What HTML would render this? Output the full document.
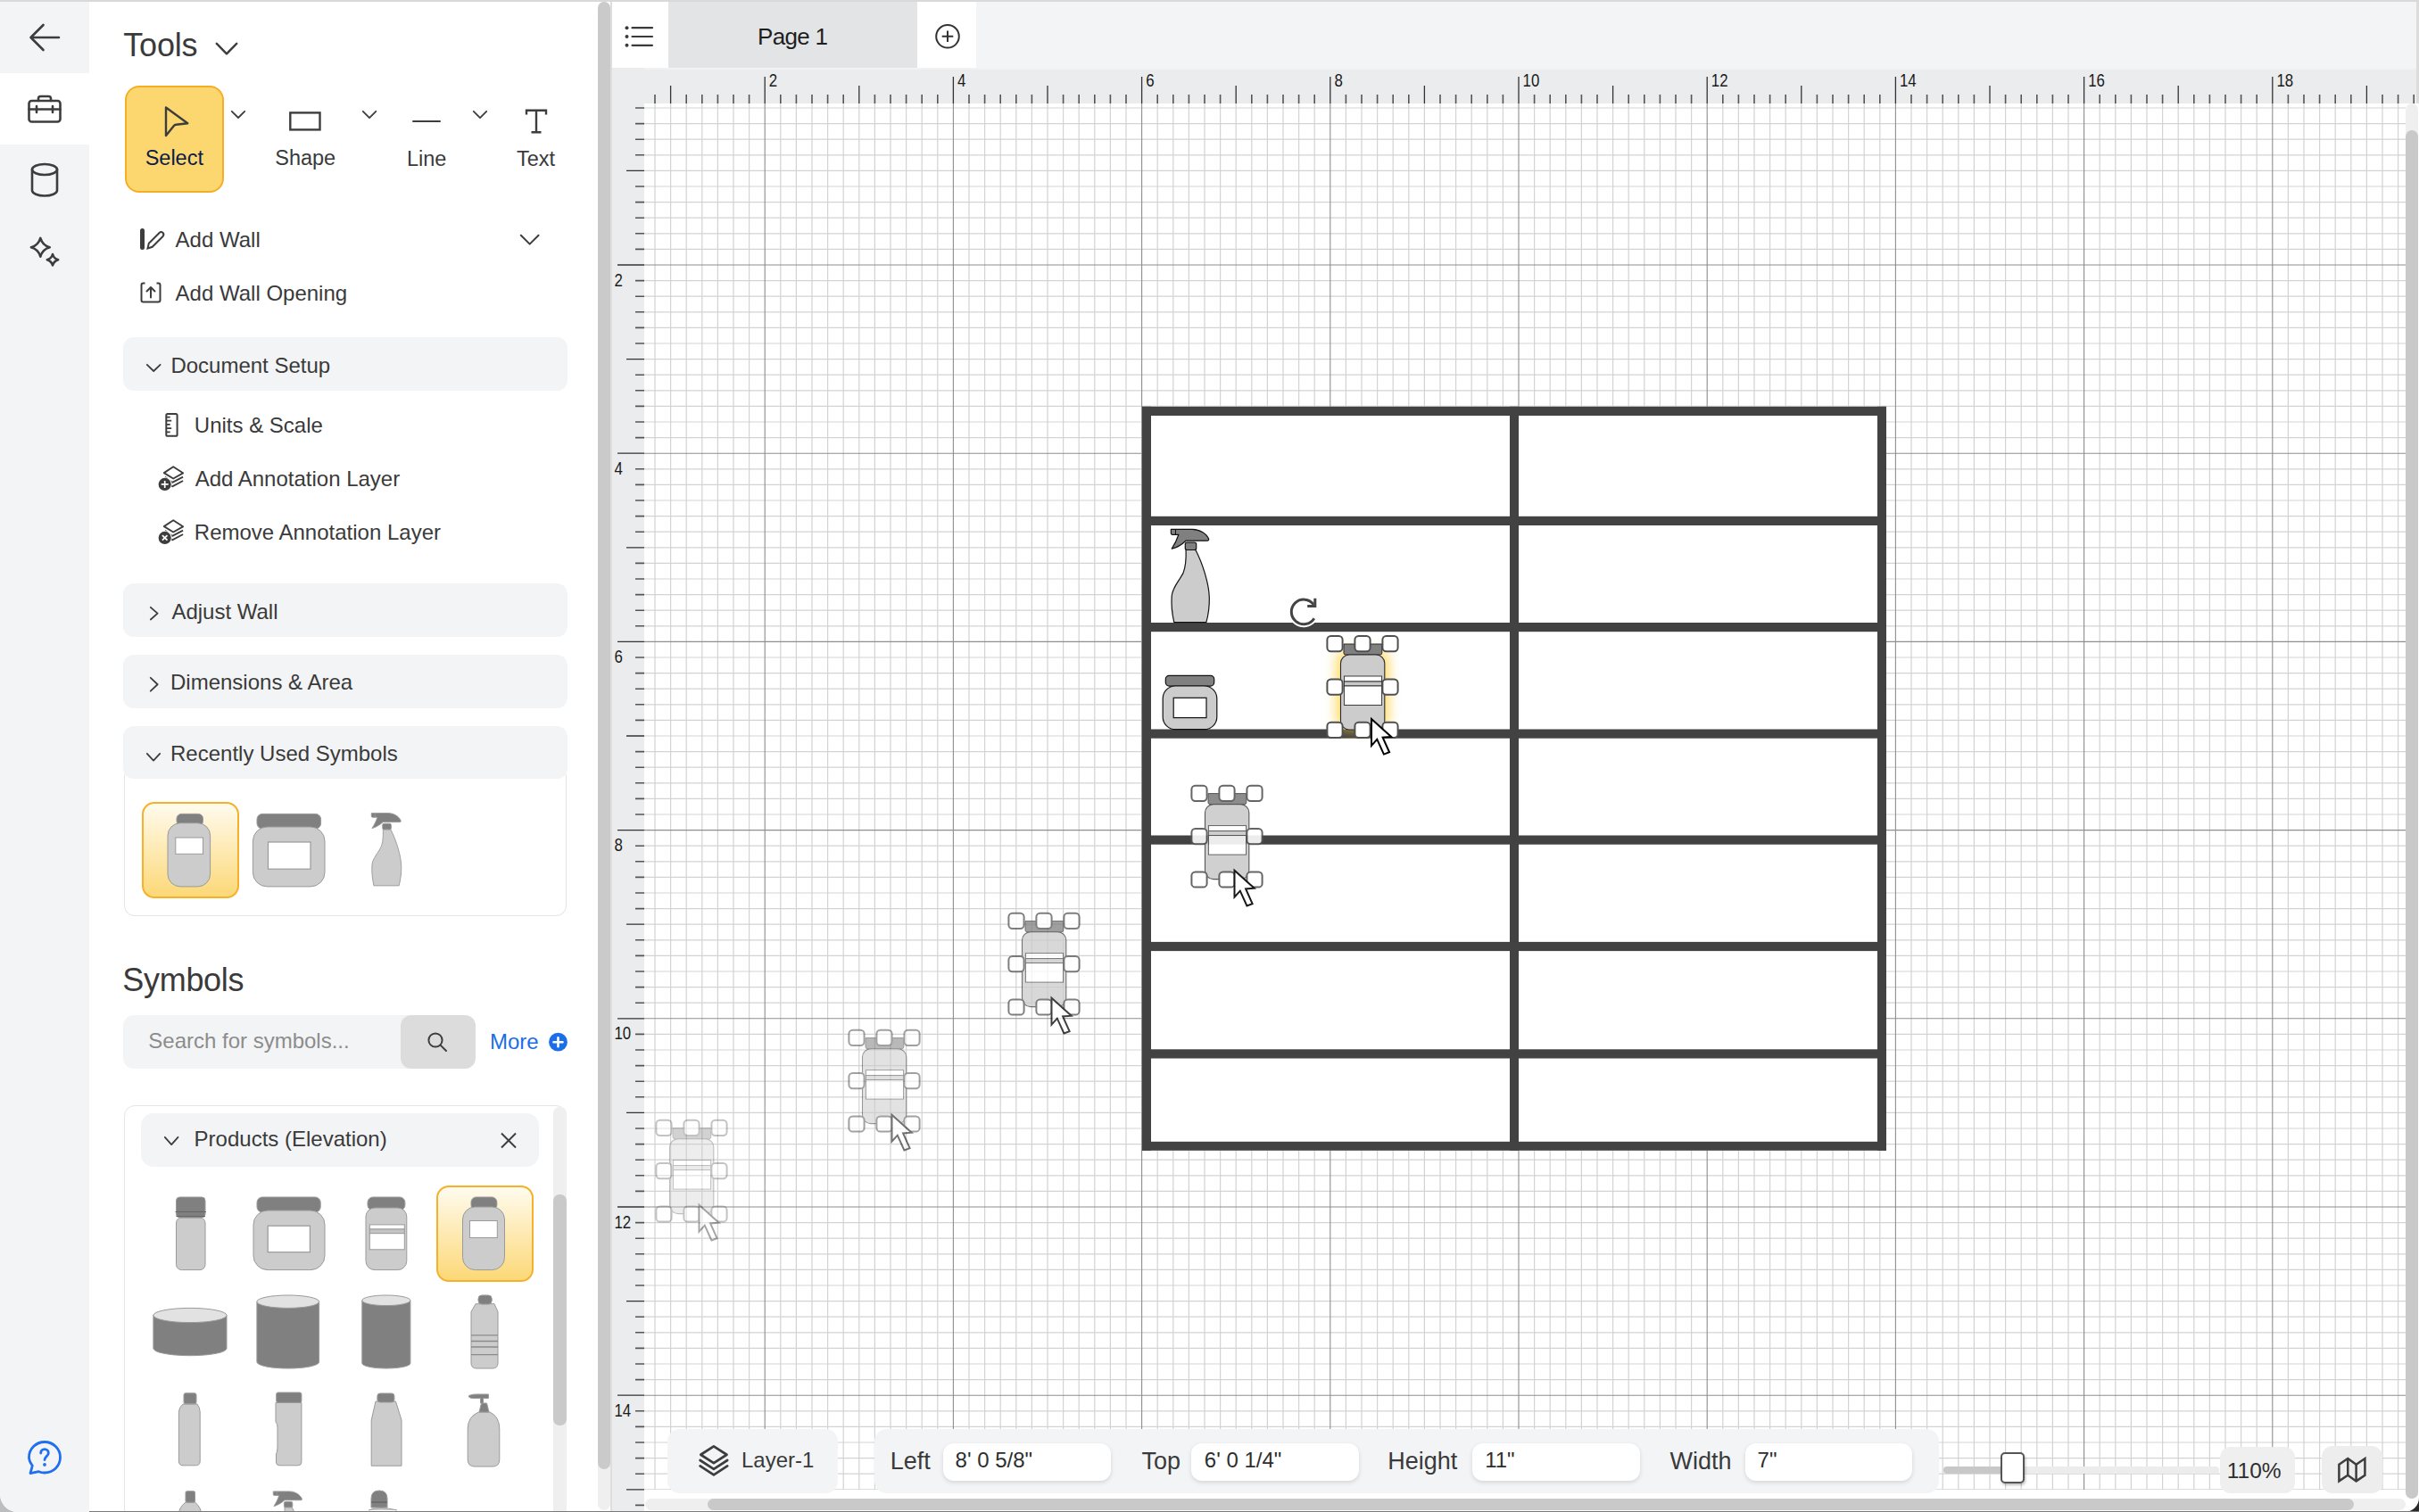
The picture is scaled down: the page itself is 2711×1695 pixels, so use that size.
<!DOCTYPE html>
<html><head><meta charset="utf-8">
<style>
*{margin:0;padding:0;box-sizing:border-box;}
html,body{width:2711px;height:1695px;overflow:hidden;background:#ffffff;}
body{position:relative;font-family:"Liberation Sans",sans-serif;color:#3a3a3a;}
.a{position:absolute;}
.t{position:absolute;white-space:nowrap;line-height:1;}
</style></head><body>

<div class="a" style="left:0;top:0;width:1400px;height:1695px;background:#bdbdbd"></div>
<div class="a" style="left:1400px;top:0;width:1311px;height:1695px;background:#2a2a2a"></div>
<div class="a" style="left:0;top:0;width:2711px;height:1695px;background:#fff;border-radius:0 0 16px 20px;overflow:hidden">
</div>
<div class="a" style="left:0;top:0;width:2711px;height:2px;background:#d9d9d9"></div>
<div class="a" style="left:0;top:2px;width:100px;height:1693px;background:#f3f4f6;border-bottom-left-radius:20px"></div>
<div class="a" style="left:0;top:82px;width:100px;height:80px;background:#fff"></div>
<svg class="a" style="left:30px;top:24px" width="40" height="36" viewBox="0 0 40 36"><path d="M4.5 18H36M18.5 4L4.5 18L18.5 32" fill="none" stroke="#3d3d3d" stroke-width="2.6" stroke-linecap="round" stroke-linejoin="round"/></svg>
<svg class="a" style="left:30px;top:105px" width="40" height="34" viewBox="0 0 40 34"><rect x="2.5" x2="0" y="8" width="35" height="23.5" rx="3" fill="none" stroke="#3d3d3d" stroke-width="2.6" stroke-linecap="round" stroke-linejoin="round"/><path d="M13 8V5.5a2.5 2.5 0 0 1 2.5-2.5h9a2.5 2.5 0 0 1 2.5 2.5V8M2.5 17.5H37.5M11 14V21M29 14V21" fill="none" stroke="#3d3d3d" stroke-width="2.6" stroke-linecap="round" stroke-linejoin="round"/></svg>
<svg class="a" style="left:32px;top:182px" width="36" height="40" viewBox="0 0 36 40"><ellipse cx="18" cy="8" rx="14" ry="6" fill="none" stroke="#3d3d3d" stroke-width="2.6" stroke-linecap="round" stroke-linejoin="round"/><path d="M4 8V31.5c0 3.3 6.3 6 14 6s14-2.7 14-6V8" fill="none" stroke="#3d3d3d" stroke-width="2.6" stroke-linecap="round" stroke-linejoin="round"/></svg>
<svg class="a" style="left:30px;top:263px" width="40" height="38" viewBox="0 0 40 38"><path d="M15.3 3.9000000000000004C16.76 9.10 20.50 12.84 25.700000000000003 14.3C20.50 15.76 16.76 19.50 15.3 24.700000000000003C13.84 19.50 10.10 15.76 4.9 14.3C10.10 12.84 13.84 9.10 15.3 3.9000000000000004Z" fill="none" stroke="#3d3d3d" stroke-width="2.6" stroke-linecap="round" stroke-linejoin="round"/><path d="M29 22.0C29.87 25.10 32.10 27.33 35.2 28.2C32.10 29.07 29.87 31.30 29 34.4C28.13 31.30 25.90 29.07 22.8 28.2C25.90 27.33 28.13 25.10 29 22.0Z" fill="none" stroke="#3d3d3d" stroke-width="2.6" stroke-linecap="round" stroke-linejoin="round"/></svg>
<svg class="a" style="left:29px;top:1613px" width="42" height="42" viewBox="0 0 42 42"><path d="M21 3.5C30.8 3.5 38.5 11.3 38.5 20.8S30.8 38 21 38C18.5 38 16.3 37.5 14.5 36.7L5 38.6L7.3 30C5.3 27.3 3.5 24 3.5 20.8C3.5 11.3 11.2 3.5 21 3.5Z" fill="none" stroke="#1f6fee" stroke-width="2.8" stroke-linejoin="round"/><path d="M16.7 16C16.7 13.3 18.6 11.7 21 11.7S25.3 13.3 25.3 15.9C25.3 19 21 20.2 21 23.6" fill="none" stroke="#1f6fee" stroke-width="2.8" stroke-linecap="round"/><circle cx="21" cy="28.9" r="1.9" fill="#1f6fee"/></svg>
<div class="a" style="left:670px;top:2px;width:14px;height:1691px;background:#efefef;border-radius:7px"></div>
<div class="a" style="left:670px;top:2px;width:14px;height:1645px;background:#cacaca;border-radius:7px"></div>
<div class="a" style="left:684px;top:2px;width:2px;height:1693px;background:#dedede"></div>
<div class="a" style="left:686px;top:2px;width:2024px;height:74px;background:#f3f4f6"></div>
<div class="a" style="left:686px;top:2px;width:62.6px;height:73.5px;background:#fff"></div>
<div class="a" style="left:748.6px;top:2px;width:279.4px;height:73.5px;background:#e3e4e6"></div>
<div class="a" style="left:1028px;top:2px;width:66px;height:73.5px;background:#fff"></div>
<div class="a" style="left:2708px;top:2px;width:3px;height:74px;background:#dcdcdc"></div>
<svg class="a" style="left:698px;top:26px" width="36" height="30" viewBox="0 0 36 30"><g fill="#3a3a3a"><circle cx="4.5" cy="5.2" r="2"/><circle cx="4.5" cy="15" r="2"/><circle cx="4.5" cy="24.8" r="2"/></g><g stroke="#3a3a3a" stroke-width="2.2" stroke-linecap="round"><path d="M10.5 5.2H33M10.5 15H33M10.5 24.8H33"/></g></svg>
<div class="t" style="left:849px;top:27.5px;font-size:26px;letter-spacing:-0.7px;color:#1f1f1f">Page 1</div>
<svg class="a" style="left:1046px;top:25px" width="32" height="32" viewBox="0 0 32 32"><circle cx="16" cy="15.8" r="12.8" fill="none" stroke="#333" stroke-width="2"/><path d="M16 9.5V22.1M9.7 15.8H22.3" stroke="#333" stroke-width="2"/></svg>
<div class="t" style="left:138.3px;top:33.1px;font-size:36px;color:#3a3a3a;letter-spacing:-0.2px">Tools</div>
<svg class="a" style="left:242px;top:48.4px;overflow:visible" width="24" height="13.100000000000001" viewBox="0 0 24 13.100000000000001"><path d="M0.8 0.8L12.00 12.30L23.20 0.8" fill="none" stroke="#3d3d3d" stroke-width="2.4" stroke-linecap="round" stroke-linejoin="round"/></svg>
<div class="a" style="left:140.4px;top:96px;width:110.3px;height:119.7px;background:#fcd770;border-radius:16px;border:2px solid #f6af24"></div>
<svg class="a" style="left:182px;top:117px;overflow:visible" width="32" height="38" viewBox="0 0 32 38"><path d="M4 3.5L28.3 21.2L15.2 22.8Q13.8 23 12.9 24.1L4 35Z" fill="none" stroke="#3d3d3d" stroke-width="2.4" stroke-linejoin="round"/></svg>
<div class="t" style="left:-4.7px;width:400px;text-align:center;top:166.0px;font-size:23.5px;color:#0c1d47;">Select</div>
<svg class="a" style="left:259px;top:124px;overflow:visible" width="16" height="8.800000000000011" viewBox="0 0 16 8.800000000000011"><path d="M0.8 0.8L8.00 8.00L15.20 0.8" fill="none" stroke="#3d3d3d" stroke-width="1.8" stroke-linecap="round" stroke-linejoin="round"/></svg>
<svg class="a" style="left:323px;top:124px;overflow:visible" width="38" height="24" viewBox="0 0 38 24"><rect x="2.3" y="2.4" width="33.2" height="19" fill="none" stroke="#3d3d3d" stroke-width="2.4"/></svg>
<div class="t" style="left:142.2px;width:400px;text-align:center;top:166.1px;font-size:23.5px;color:#3a3a3a;">Shape</div>
<svg class="a" style="left:405.9px;top:124px;overflow:visible" width="16.100000000000023" height="9" viewBox="0 0 16.100000000000023 9"><path d="M0.8 0.8L8.05 8.20L15.30 0.8" fill="none" stroke="#3d3d3d" stroke-width="1.8" stroke-linecap="round" stroke-linejoin="round"/></svg>
<div class="a" style="left:461.6px;top:134.8px;width:32.7px;height:2.4px;background:#3d3d3d;border-radius:1px;"></div>
<div class="t" style="left:278.2px;width:400px;text-align:center;top:166.5px;font-size:23.5px;color:#3a3a3a;">Line</div>
<svg class="a" style="left:530px;top:124px;overflow:visible" width="16" height="9" viewBox="0 0 16 9"><path d="M0.8 0.8L8.00 8.20L15.20 0.8" fill="none" stroke="#3d3d3d" stroke-width="1.8" stroke-linecap="round" stroke-linejoin="round"/></svg>
<svg class="a" style="left:587px;top:121px;overflow:visible" width="28" height="30" viewBox="0 0 28 30"><path d="M3 7.5V2.7H25V7.5M14 2.7V27.3M8.5 27.3H19.5" fill="none" stroke="#3d3d3d" stroke-width="2.4"/></svg>
<div class="t" style="left:400.5px;width:400px;text-align:center;top:166.5px;font-size:23.5px;color:#3a3a3a;">Text</div>
<div class="a" style="left:157.4px;top:255.5px;width:5.0px;height:24.3px;background:#3d3d3d;border-radius:2.5px;"></div>
<svg class="a" style="left:163px;top:258px;overflow:visible" width="22" height="23" viewBox="0 0 22 23"><path d="M2.5 20.5L3.8 14.8L15.6 3Q17.6 1.1 19.6 3Q21.3 5 19.5 7L7.7 18.8Z" fill="none" stroke="#3d3d3d" stroke-width="2"/></svg>
<div class="t" style="left:196.6px;top:257.0px;font-size:24px;color:#3a3a3a;">Add Wall</div>
<svg class="a" style="left:583.2px;top:262.9px;overflow:visible" width="21.399999999999977" height="11.400000000000034" viewBox="0 0 21.399999999999977 11.400000000000034"><path d="M0.8 0.8L10.70 10.60L20.60 0.8" fill="none" stroke="#3d3d3d" stroke-width="2.0" stroke-linecap="round" stroke-linejoin="round"/></svg>
<svg class="a" style="left:156px;top:315px;overflow:visible" width="28" height="26" viewBox="0 0 28 26"><path d="M6.5 2.5H4.5Q2.5 2.5 2.5 4.5V21.5Q2.5 23.5 4.5 23.5H21.5Q23.5 23.5 23.5 21.5V4.5Q23.5 2.5 21.5 2.5H19.5" fill="none" stroke="#3d3d3d" stroke-width="2"/><path d="M13 18.5V7M8.5 11.5L13 7L17.5 11.5" fill="none" stroke="#3d3d3d" stroke-width="2" stroke-linecap="round" stroke-linejoin="round"/></svg>
<div class="t" style="left:196.6px;top:317.1px;font-size:24px;color:#3a3a3a;">Add Wall Opening</div>
<div class="a" style="left:138px;top:378px;width:497.5px;height:59.8px;background:#f3f4f6;border-radius:12px;"></div>
<svg class="a" style="left:163.8px;top:408.2px;overflow:visible" width="16.399999999999977" height="8.800000000000011" viewBox="0 0 16.399999999999977 8.800000000000011"><path d="M0.8 0.8L8.20 8.00L15.60 0.8" fill="none" stroke="#3d3d3d" stroke-width="1.8" stroke-linecap="round" stroke-linejoin="round"/></svg>
<div class="t" style="left:191.4px;top:397.7px;font-size:24px;color:#3a3a3a;">Document Setup</div>
<svg class="a" style="left:183px;top:461px;overflow:visible" width="18" height="30" viewBox="0 0 18 30"><rect x="3.3" y="3" width="12.3" height="24.8" rx="1.6" fill="none" stroke="#3d3d3d" stroke-width="2"/><path d="M3.3 6.7H7.7M3.3 10.7H9.2M3.3 14.8H7.7M3.3 19.2H9.2M3.3 23.3H7.7" stroke="#3d3d3d" stroke-width="1.7"/></svg>
<div class="t" style="left:217.8px;top:465.1px;font-size:24px;color:#3a3a3a;">Units &amp; Scale</div>
<svg class="a" style="left:176px;top:515px;overflow:visible" width="34" height="40" viewBox="0 0 34 40"><path d="M18.2 8.2L29.1 15.3L18.2 21.5L7.8 15.1Z" fill="none" stroke="#3d3d3d" stroke-width="1.9" stroke-linejoin="round"/><path d="M9 19.8L17.1 25.9L29.1 19.6M9 24.2L17.1 30.3L29.1 24" fill="none" stroke="#3d3d3d" stroke-width="1.9" stroke-linejoin="round"/><circle cx="8.7" cy="27.9" r="8" fill="#fff"/><circle cx="8.7" cy="27.9" r="7.1" fill="#3d3d3d"/><path d="M8.7 23.9V31.9M4.7 27.9H12.7" stroke="#fff" stroke-width="1.7"/></svg>
<div class="t" style="left:218.7px;top:524.9px;font-size:24px;color:#3a3a3a;">Add Annotation Layer</div>
<svg class="a" style="left:176px;top:575.1px;overflow:visible" width="34" height="40" viewBox="0 0 34 40"><path d="M18.2 8.2L29.1 15.3L18.2 21.5L7.8 15.1Z" fill="none" stroke="#3d3d3d" stroke-width="1.9" stroke-linejoin="round"/><path d="M9 19.8L17.1 25.9L29.1 19.6M9 24.2L17.1 30.3L29.1 24" fill="none" stroke="#3d3d3d" stroke-width="1.9" stroke-linejoin="round"/><circle cx="8.7" cy="27.9" r="8" fill="#fff"/><circle cx="8.7" cy="27.9" r="7.1" fill="#3d3d3d"/><path d="M5.9 25.1L11.5 30.7M11.5 25.1L5.9 30.7" stroke="#fff" stroke-width="1.7"/></svg>
<div class="t" style="left:217.8px;top:585.1px;font-size:24px;color:#3a3a3a;">Remove Annotation Layer</div>
<div class="a" style="left:138.3px;top:654.3px;width:497.4px;height:59.6px;background:#f3f4f6;border-radius:12px;"></div>
<svg class="a" style="left:167.7px;top:680.4px;overflow:visible" width="9.400000000000006" height="15.300000000000068" viewBox="0 0 9.400000000000006 15.300000000000068"><path d="M0.8 0.8L8.60 7.65L0.8 14.50" fill="none" stroke="#3d3d3d" stroke-width="1.8" stroke-linecap="round" stroke-linejoin="round"/></svg>
<div class="t" style="left:192.4px;top:673.9px;font-size:24px;color:#3a3a3a;">Adjust Wall</div>
<div class="a" style="left:138.3px;top:734.2px;width:497.4px;height:59.6px;background:#f3f4f6;border-radius:12px;"></div>
<svg class="a" style="left:167.7px;top:759.4px;overflow:visible" width="9.400000000000006" height="16.5" viewBox="0 0 9.400000000000006 16.5"><path d="M0.8 0.8L8.60 8.25L0.8 15.70" fill="none" stroke="#3d3d3d" stroke-width="1.8" stroke-linecap="round" stroke-linejoin="round"/></svg>
<div class="t" style="left:191.0px;top:753.4px;font-size:24px;color:#3a3a3a;">Dimensions &amp; Area</div>
<div class="a" style="left:138.8px;top:860px;width:496.2px;height:166.7px;background:#fff;border-radius:12px;border:1.5px solid #e4e4e4;border-top:none"></div>
<div class="a" style="left:138.3px;top:814.2px;width:497.4px;height:59.2px;background:#f3f4f6;border-radius:12px;"></div>
<svg class="a" style="left:164px;top:843.8px;overflow:visible" width="16" height="9.400000000000091" viewBox="0 0 16 9.400000000000091"><path d="M0.8 0.8L8.00 8.60L15.20 0.8" fill="none" stroke="#3d3d3d" stroke-width="1.8" stroke-linecap="round" stroke-linejoin="round"/></svg>
<div class="t" style="left:191.0px;top:833.4px;font-size:24px;color:#3a3a3a;">Recently Used Symbols</div>
<div class="a" style="left:158.5px;top:898.6px;width:109.1px;height:108.9px;background:linear-gradient(#fffbee,#fcd877);border-radius:14px;border:2px solid #f6b02a"></div>
<div class="t" style="left:137.3px;top:1081.0px;font-size:36px;color:#3a3a3a;letter-spacing:-0.3px">Symbols</div>
<div class="a" style="left:138.3px;top:1138.2px;width:394.4px;height:59.4px;background:#f3f4f6;border-radius:12px;"></div>
<div class="a" style="left:449.2px;top:1138.2px;width:83.5px;height:59.4px;background:#dcdcdc;border-radius:12px;"></div>
<div class="t" style="left:166.3px;top:1154.7px;font-size:24px;color:#8c8c8c;">Search for symbols...</div>
<svg class="a" style="left:478px;top:1156px;overflow:visible" width="25" height="25" viewBox="0 0 25 25"><circle cx="10" cy="10" r="7.6" fill="none" stroke="#3d3d3d" stroke-width="2"/><path d="M15.6 15.6L22 22" stroke="#3d3d3d" stroke-width="2" stroke-linecap="round"/></svg>
<div class="t" style="left:549.0px;top:1155.5px;font-size:24px;color:#1b6ee8;">More</div>
<svg class="a" style="left:614px;top:1157px;overflow:visible" width="23" height="23" viewBox="0 0 23 23"><circle cx="11.5" cy="11.2" r="10.4" fill="#1b6ee8"/><path d="M11.5 6.2V16.2M6.5 11.2H16.5" stroke="#fff" stroke-width="2.6" stroke-linecap="round"/></svg>
<div class="a" style="left:138.8px;top:1238.6px;width:496.4px;height:501.4px;background:#fff;border-radius:12px;border:1.5px solid #e4e4e4"></div>
<div class="a" style="left:620px;top:1240.8px;width:14.5px;height:499.2px;background:#efefef;border-radius:7px;"></div>
<div class="a" style="left:620px;top:1339.3px;width:14.5px;height:258.3px;background:#c9c9c9;border-radius:7px;"></div>
<div class="a" style="left:158px;top:1248px;width:445.7px;height:59.6px;background:#f3f4f6;border-radius:14px;"></div>
<svg class="a" style="left:183.7px;top:1273.6px;overflow:visible" width="16.30000000000001" height="9.900000000000091" viewBox="0 0 16.30000000000001 9.900000000000091"><path d="M0.8 0.8L8.15 9.10L15.50 0.8" fill="none" stroke="#3d3d3d" stroke-width="1.8" stroke-linecap="round" stroke-linejoin="round"/></svg>
<div class="t" style="left:217.6px;top:1265.4px;font-size:24px;color:#3a3a3a;">Products (Elevation)</div>
<svg class="a" style="left:560px;top:1269px;overflow:visible" width="20" height="19" viewBox="0 0 20 19"><path d="M2 1.5L18 17.5M18 1.5L2 17.5" stroke="#3d3d3d" stroke-width="2"/></svg>
<div class="a" style="left:488.5px;top:1328.6px;width:109.3px;height:108.9px;background:linear-gradient(#fffbee,#fcd877);border-radius:14px;border:2px solid #f6b02a"></div>
<svg class="a" style="left:0;top:0" width="700" height="1695" viewBox="0 0 700 1695"><rect x="198" y="912.4" width="29.5" height="13.3" rx="5.2" fill="#808080" stroke="#9a9a9a" stroke-width="1"/><rect x="188" y="922.7" width="47.6" height="71.2" rx="14" fill="#cccccc" stroke="#9a9a9a" stroke-width="1"/><rect x="196.8" y="939" width="30.7" height="18.3" fill="#fff" stroke="#9a9a9a" stroke-width="1"/><rect x="288" y="912.4" width="71.6" height="16.6" rx="6" fill="#808080" stroke="#9a9a9a" stroke-width="1"/><rect x="283.4" y="927" width="80.6" height="66.9" rx="16" fill="#cccccc" stroke="#9a9a9a" stroke-width="1"/><rect x="300.5" y="944" width="47.5" height="30.2" fill="#fff" stroke="#999" stroke-width="1.2"/><g transform="translate(416,911.3) scale(0.78) translate(-1312,-593)" stroke="#9a9a9a" stroke-width="1.2" stroke-linejoin="round"><path d="M1329.1 616.5C1329.5 628 1328.5 636 1326.1 641.9C1322.5 650 1314 658 1313.2 668C1312.5 678 1314 690 1315.8 697.6H1351.9C1354 690 1355.5 680 1355.3 670C1355 655 1348 632 1339.9 616.5Z" fill="#cccccc"/><rect x="1328.3" y="608.4" width="12.4" height="8.5" rx="2" fill="#808080"/><path d="M1312.35 593.3H1336.4C1345 593.5 1352.5 598.5 1354.6 604.3Q1355 606.2 1353 606.2H1329C1325 610 1318 614 1313.2 615.2C1316 611 1319 605 1320.9 599.3H1313.8Q1312.35 599.3 1312.35 597.8Z" fill="#808080"/><path d="M1317.5 593.8V599" stroke-width="1"/></g><rect x="197.5" y="1365" width="32.5" height="58.6" rx="6" fill="#cccccc" stroke="#9a9a9a" stroke-width="1"/><rect x="197.5" y="1342" width="32.5" height="23" rx="4" fill="#808080" stroke="#9a9a9a" stroke-width="1"/><path d="M196.5 1358.5H231M197.5 1363.5H230" stroke="#666" stroke-width="1.2"/><rect x="288" y="1342" width="71.2" height="17.0" rx="6" fill="#808080" stroke="#9a9a9a" stroke-width="1"/><rect x="284" y="1357" width="80.0" height="66.6" rx="16" fill="#cccccc" stroke="#9a9a9a" stroke-width="1"/><rect x="300.2" y="1374.2" width="47.2" height="29.5" fill="#fff" stroke="#999" stroke-width="1.2"/><rect x="412" y="1342" width="41.9" height="14.8" rx="5.9" fill="#808080" stroke="#9a9a9a" stroke-width="1"/><rect x="410" y="1354" width="45.8" height="69.6" rx="10" fill="#cccccc" stroke="#9a9a9a" stroke-width="1"/><rect x="414.3" y="1372.9" width="39.0" height="5.1" fill="#fff" stroke="#9a9a9a" stroke-width="1"/><rect x="414.3" y="1378" width="39.0" height="4.7" fill="#c4c4c4" stroke="#9a9a9a" stroke-width="1"/><rect x="414.3" y="1382.7" width="39.0" height="18.1" fill="#fff" stroke="#9a9a9a" stroke-width="1"/><rect x="528" y="1342" width="28.9" height="14.3" rx="5.6" fill="#808080" stroke="#9a9a9a" stroke-width="1"/><rect x="518.5" y="1353" width="47.0" height="70.6" rx="14" fill="#cccccc" stroke="#9a9a9a" stroke-width="1"/><rect x="526.5" y="1368.5" width="30.8" height="19.0" fill="#fff" stroke="#9a9a9a" stroke-width="1"/><path d="M171.9 1474.5V1511.6000000000001A41.05 8.099999999999909 0 0 0 254 1511.6000000000001V1474.5Z" fill="#808080" stroke="#9a9a9a" stroke-width="1"/><ellipse cx="212.95" cy="1474.5" rx="41.05" ry="8.099999999999909" fill="#e2e2e2" stroke="#9a9a9a" stroke-width="1"/><path d="M287.9 1459.2V1526.8A34.85000000000002 7.2000000000000455 0 0 0 357.6 1526.8V1459.2Z" fill="#808080" stroke="#9a9a9a" stroke-width="1"/><ellipse cx="322.75" cy="1459.2" rx="34.85000000000002" ry="7.2000000000000455" fill="#e2e2e2" stroke="#9a9a9a" stroke-width="1"/><path d="M405.8 1457.8V1528.2A27.049999999999983 5.7999999999999545 0 0 0 459.9 1528.2V1457.8Z" fill="#808080" stroke="#9a9a9a" stroke-width="1"/><ellipse cx="432.85" cy="1457.8" rx="27.049999999999983" ry="5.7999999999999545" fill="#e2e2e2" stroke="#9a9a9a" stroke-width="1"/><path d="M533 1461.7H554L558 1470.5V1528Q558 1534 552 1534H534Q528 1534 528 1528V1470.5Z" fill="#cccccc" stroke="#9a9a9a" stroke-width="1"/><rect x="536" y="1452" width="15.2" height="10" rx="4" fill="#808080" stroke="#9a9a9a" stroke-width="1"/><path d="M528 1496.8H558M528 1503.5H558M528 1510H558M528 1518.7H558" stroke="#8a8a8a" stroke-width="1.3"/><path d="M205 1574H221Q224.2 1578 224.2 1583V1638Q224.2 1642.8 219.5 1642.8H205Q200.4 1642.8 200.4 1638V1583Q200.4 1578 205 1574Z" fill="#cccccc" stroke="#9a9a9a" stroke-width="1"/><rect x="206" y="1561.8" width="14" height="12" rx="2" fill="#808080" stroke="#9a9a9a" stroke-width="1"/><path d="M309 1572.4H337.9V1638.8Q337.9 1642.8 334 1642.8H313Q309.5 1642.8 309.5 1639V1630Q311 1628 311 1622V1600Q311 1596 309 1594Z" fill="#cccccc" stroke="#9a9a9a" stroke-width="1"/><rect x="309.7" y="1561" width="28.2" height="11.4" rx="2" fill="#808080" stroke="#9a9a9a" stroke-width="1"/><path d="M421 1571H443.5L450 1592V1643.2H416.2V1592Z" fill="#cccccc" stroke="#9a9a9a" stroke-width="1"/><rect x="422.9" y="1562" width="19" height="10" rx="3" fill="#808080" stroke="#9a9a9a" stroke-width="1"/><path d="M536.5 1583H549Q559.8 1588 559.8 1602V1636Q559.8 1644 552 1644H532Q524.2 1644 524.2 1636V1602Q524.2 1588 536.5 1583Z" fill="#cccccc" stroke="#9a9a9a" stroke-width="1"/><path d="M537 1583L539.5 1573H545.5L548 1583Z" fill="#808080" stroke="#9a9a9a" stroke-width="1"/><path d="M525.5 1564.5Q530 1562.5 536 1563H547.4V1567.5H541.5V1573H538.5V1567.5H530Q527 1567.5 525.5 1566Z" fill="#808080" stroke="#9a9a9a" stroke-width="1"/><path d="M208 1684Q200 1690 200 1700H226Q226 1690 218.5 1684Z" fill="#cccccc" stroke="#9a9a9a" stroke-width="1"/><rect x="208" y="1671.7" width="10.5" height="12.5" rx="1.5" fill="#808080" stroke="#9a9a9a" stroke-width="1"/><g transform="translate(306,1671.7) scale(0.76) translate(-1312,-593)" stroke="#9a9a9a" stroke-width="1.2" stroke-linejoin="round"><path d="M1329.1 616.5C1329.5 628 1328.5 636 1326.1 641.9C1322.5 650 1314 658 1313.2 668C1312.5 678 1314 690 1315.8 697.6H1351.9C1354 690 1355.5 680 1355.3 670C1355 655 1348 632 1339.9 616.5Z" fill="#cccccc"/><rect x="1328.3" y="608.4" width="12.4" height="8.5" rx="2" fill="#808080"/><path d="M1312.35 593.3H1336.4C1345 593.5 1352.5 598.5 1354.6 604.3Q1355 606.2 1353 606.2H1329C1325 610 1318 614 1313.2 615.2C1316 611 1319 605 1320.9 599.3H1313.8Q1312.35 599.3 1312.35 597.8Z" fill="#808080"/><path d="M1317.5 593.8V599" stroke-width="1"/></g><path d="M416 1690V1680Q416 1671 425 1671Q434 1671 434 1680V1690Z" fill="#808080" stroke="#9a9a9a" stroke-width="1"/><path d="M416 1684H434" stroke="#666" stroke-width="1.5"/><path d="M413 1693Q425 1688 445 1693" fill="#cccccc" stroke="#9a9a9a" stroke-width="1"/></svg>
<svg class="a" style="left:0;top:0" width="2711" height="1695" viewBox="0 0 2711 1695">
<path d="M734.00 116V1680M751.60 116V1680M769.20 116V1680M786.80 116V1680M804.40 116V1680M822.00 116V1680M839.60 116V1680M874.80 116V1680M892.40 116V1680M910.00 116V1680M927.60 116V1680M945.20 116V1680M962.80 116V1680M980.40 116V1680M998.00 116V1680M1015.60 116V1680M1033.20 116V1680M1050.80 116V1680M1086.00 116V1680M1103.60 116V1680M1121.20 116V1680M1138.80 116V1680M1156.40 116V1680M1174.00 116V1680M1191.60 116V1680M1209.20 116V1680M1226.80 116V1680M1244.40 116V1680M1262.00 116V1680M1297.20 116V1680M1314.80 116V1680M1332.40 116V1680M1350.00 116V1680M1367.60 116V1680M1385.20 116V1680M1402.80 116V1680M1420.40 116V1680M1438.00 116V1680M1455.60 116V1680M1473.20 116V1680M1508.40 116V1680M1526.00 116V1680M1543.60 116V1680M1561.20 116V1680M1578.80 116V1680M1596.40 116V1680M1614.00 116V1680M1631.60 116V1680M1649.20 116V1680M1666.80 116V1680M1684.40 116V1680M1719.60 116V1680M1737.20 116V1680M1754.80 116V1680M1772.40 116V1680M1790.00 116V1680M1807.60 116V1680M1825.20 116V1680M1842.80 116V1680M1860.40 116V1680M1878.00 116V1680M1895.60 116V1680M1930.80 116V1680M1948.40 116V1680M1966.00 116V1680M1983.60 116V1680M2001.20 116V1680M2018.80 116V1680M2036.40 116V1680M2054.00 116V1680M2071.60 116V1680M2089.20 116V1680M2106.80 116V1680M2142.00 116V1680M2159.60 116V1680M2177.20 116V1680M2194.80 116V1680M2212.40 116V1680M2230.00 116V1680M2247.60 116V1680M2265.20 116V1680M2282.80 116V1680M2300.40 116V1680M2318.00 116V1680M2353.20 116V1680M2370.80 116V1680M2388.40 116V1680M2406.00 116V1680M2423.60 116V1680M2441.20 116V1680M2458.80 116V1680M2476.40 116V1680M2494.00 116V1680M2511.60 116V1680M2529.20 116V1680M2564.40 116V1680M2582.00 116V1680M2599.60 116V1680M2617.20 116V1680M2634.80 116V1680M2652.40 116V1680M2670.00 116V1680M2687.60 116V1680M722 121.00H2696M722 138.60H2696M722 156.20H2696M722 173.80H2696M722 191.40H2696M722 209.00H2696M722 226.60H2696M722 244.20H2696M722 261.80H2696M722 279.40H2696M722 314.60H2696M722 332.20H2696M722 349.80H2696M722 367.40H2696M722 385.00H2696M722 402.60H2696M722 420.20H2696M722 437.80H2696M722 455.40H2696M722 473.00H2696M722 490.60H2696M722 525.80H2696M722 543.40H2696M722 561.00H2696M722 578.60H2696M722 596.20H2696M722 613.80H2696M722 631.40H2696M722 649.00H2696M722 666.60H2696M722 684.20H2696M722 701.80H2696M722 737.00H2696M722 754.60H2696M722 772.20H2696M722 789.80H2696M722 807.40H2696M722 825.00H2696M722 842.60H2696M722 860.20H2696M722 877.80H2696M722 895.40H2696M722 913.00H2696M722 948.20H2696M722 965.80H2696M722 983.40H2696M722 1001.00H2696M722 1018.60H2696M722 1036.20H2696M722 1053.80H2696M722 1071.40H2696M722 1089.00H2696M722 1106.60H2696M722 1124.20H2696M722 1159.40H2696M722 1177.00H2696M722 1194.60H2696M722 1212.20H2696M722 1229.80H2696M722 1247.40H2696M722 1265.00H2696M722 1282.60H2696M722 1300.20H2696M722 1317.80H2696M722 1335.40H2696M722 1370.60H2696M722 1388.20H2696M722 1405.80H2696M722 1423.40H2696M722 1441.00H2696M722 1458.60H2696M722 1476.20H2696M722 1493.80H2696M722 1511.40H2696M722 1529.00H2696M722 1546.60H2696M722 1581.80H2696M722 1599.40H2696M722 1617.00H2696M722 1634.60H2696M722 1652.20H2696M722 1669.80H2696" stroke="#d3d3d3" stroke-width="1.2" fill="none"/>
<path d="M857.20 116V1680M1068.40 116V1680M1279.60 116V1680M1490.80 116V1680M1702.00 116V1680M1913.20 116V1680M2124.40 116V1680M2335.60 116V1680M2546.80 116V1680M722 297.00H2696M722 508.20H2696M722 719.40H2696M722 930.60H2696M722 1141.80H2696M722 1353.00H2696M722 1564.20H2696" stroke="#8e8e8e" stroke-width="1.1" fill="none"/>
<rect x="1280" y="455.8" width="834" height="834.0" fill="#fff"/>
<rect x="1280" y="455.8" width="834" height="10.2" fill="#424242"/>
<rect x="1280" y="1279.8" width="834" height="10" fill="#424242"/>
<rect x="1280" y="455.8" width="10" height="834.0" fill="#424242"/>
<rect x="2104" y="455.8" width="10" height="834.0" fill="#424242"/>
<rect x="1692" y="455.8" width="10" height="834.0" fill="#424242"/>
<rect x="1280" y="578.8" width="834" height="10.2" fill="#424242"/>
<rect x="1280" y="698.0" width="834" height="10.2" fill="#424242"/>
<rect x="1280" y="817.5" width="834" height="10.2" fill="#424242"/>
<rect x="1280" y="936.5" width="834" height="10.2" fill="#424242"/>
<rect x="1280" y="1055.9" width="834" height="10.2" fill="#424242"/>
<rect x="1280" y="1176.3" width="834" height="10.2" fill="#424242"/>
<g stroke="#111" stroke-width="1.2" stroke-linejoin="round"><path d="M1329.1 616.5C1329.5 628 1328.5 636 1326.1 641.9C1322.5 650 1314 658 1313.2 668C1312.5 678 1314 690 1315.8 697.6H1351.9C1354 690 1355.5 680 1355.3 670C1355 655 1348 632 1339.9 616.5Z" fill="#cccccc"/><rect x="1328.3" y="608.2" width="12.4" height="8.3" rx="2" fill="#808080"/><path d="M1312.35 593.3H1336.4C1345 593.5 1352.5 598.5 1354.6 604.3Q1355 606.2 1353 606.2H1329C1325 610 1318 614 1313.2 615.2C1316 611 1319 605 1320.9 599.3H1313.8Q1312.35 599.3 1312.35 597.8Z" fill="#808080"/><path d="M1317.5 593.8V599" stroke-width="1"/></g>
<g stroke="#111" stroke-width="1.2"><rect x="1306.3" y="757.3" width="54.4" height="11.8" rx="4" fill="#808080"/><rect x="1303.2" y="769" width="60.6" height="48.7" rx="14" fill="#cccccc"/><rect x="1315.2" y="782.3" width="36.8" height="22.3" fill="#fff"/></g>
<g transform="translate(1461,686)"><path d="M11.2 -8.3A13.8 13.8 0 1 0 11.8 7.2" fill="none" stroke="#fff" stroke-width="7" stroke-linecap="round"/><path d="M11.2 -8.3A13.8 13.8 0 1 0 11.8 7.2" fill="none" stroke="#444" stroke-width="3"/><path d="M12.8 -15.2V-6.6H4.2" fill="none" stroke="#444" stroke-width="3" stroke-linejoin="miter"/></g>
<g transform="translate(744,1264.3)" opacity="0.35"><path d="M10 0.3H52.8V10.3Q52.8 12.3 50.8 12.3H12Q10 12.3 10 10.3Z" fill="#808080" stroke="#444" stroke-width="1"/><rect x="6.5" y="12.3" width="49.3" height="84" rx="9.5" fill="#cccccc" stroke="#444" stroke-width="1.1"/><rect x="10.4" y="36.3" width="42.2" height="6" fill="#fff" stroke="#444" stroke-width="0.9"/><rect x="10.4" y="42.3" width="42.2" height="5" fill="#c8c8c8" stroke="#444" stroke-width="0.9"/><rect x="10.4" y="47.3" width="42.2" height="21.5" fill="#fff" stroke="#444" stroke-width="0.9"/><rect x="-8.60" y="-8.60" width="17.2" height="17.2" rx="4.2" fill="#fff" stroke="#555" stroke-width="2"/><rect x="22.40" y="-8.60" width="17.2" height="17.2" rx="4.2" fill="#fff" stroke="#555" stroke-width="2"/><rect x="53.40" y="-8.60" width="17.2" height="17.2" rx="4.2" fill="#fff" stroke="#555" stroke-width="2"/><rect x="-8.60" y="39.75" width="17.2" height="17.2" rx="4.2" fill="#fff" stroke="#555" stroke-width="2"/><rect x="53.40" y="39.75" width="17.2" height="17.2" rx="4.2" fill="#fff" stroke="#555" stroke-width="2"/><rect x="-8.60" y="88.10" width="17.2" height="17.2" rx="4.2" fill="#fff" stroke="#555" stroke-width="2"/><rect x="22.40" y="88.10" width="17.2" height="17.2" rx="4.2" fill="#fff" stroke="#555" stroke-width="2"/><rect x="53.40" y="88.10" width="17.2" height="17.2" rx="4.2" fill="#fff" stroke="#555" stroke-width="2"/><g transform="translate(39.5,86.5)"><path d="M0 0V29.9L6.3 22.9L13.9 39.6L20.1 37.3L12.6 20.6L22.2 19.9Z" fill="#fff" stroke="#000" stroke-width="2" stroke-linejoin="miter"/></g></g>
<g transform="translate(960,1163.3)" opacity="0.55"><path d="M10 0.3H52.8V10.3Q52.8 12.3 50.8 12.3H12Q10 12.3 10 10.3Z" fill="#808080" stroke="#444" stroke-width="1"/><rect x="6.5" y="12.3" width="49.3" height="84" rx="9.5" fill="#cccccc" stroke="#444" stroke-width="1.1"/><rect x="10.4" y="36.3" width="42.2" height="6" fill="#fff" stroke="#444" stroke-width="0.9"/><rect x="10.4" y="42.3" width="42.2" height="5" fill="#c8c8c8" stroke="#444" stroke-width="0.9"/><rect x="10.4" y="47.3" width="42.2" height="21.5" fill="#fff" stroke="#444" stroke-width="0.9"/><rect x="-8.60" y="-8.60" width="17.2" height="17.2" rx="4.2" fill="#fff" stroke="#555" stroke-width="2"/><rect x="22.40" y="-8.60" width="17.2" height="17.2" rx="4.2" fill="#fff" stroke="#555" stroke-width="2"/><rect x="53.40" y="-8.60" width="17.2" height="17.2" rx="4.2" fill="#fff" stroke="#555" stroke-width="2"/><rect x="-8.60" y="39.75" width="17.2" height="17.2" rx="4.2" fill="#fff" stroke="#555" stroke-width="2"/><rect x="53.40" y="39.75" width="17.2" height="17.2" rx="4.2" fill="#fff" stroke="#555" stroke-width="2"/><rect x="-8.60" y="88.10" width="17.2" height="17.2" rx="4.2" fill="#fff" stroke="#555" stroke-width="2"/><rect x="22.40" y="88.10" width="17.2" height="17.2" rx="4.2" fill="#fff" stroke="#555" stroke-width="2"/><rect x="53.40" y="88.10" width="17.2" height="17.2" rx="4.2" fill="#fff" stroke="#555" stroke-width="2"/><g transform="translate(39.5,86.5)"><path d="M0 0V29.9L6.3 22.9L13.9 39.6L20.1 37.3L12.6 20.6L22.2 19.9Z" fill="#fff" stroke="#000" stroke-width="2" stroke-linejoin="miter"/></g></g>
<g transform="translate(1139,1032.3)" opacity="0.75"><path d="M10 0.3H52.8V10.3Q52.8 12.3 50.8 12.3H12Q10 12.3 10 10.3Z" fill="#808080" stroke="#444" stroke-width="1"/><rect x="6.5" y="12.3" width="49.3" height="84" rx="9.5" fill="#cccccc" stroke="#444" stroke-width="1.1"/><rect x="10.4" y="36.3" width="42.2" height="6" fill="#fff" stroke="#444" stroke-width="0.9"/><rect x="10.4" y="42.3" width="42.2" height="5" fill="#c8c8c8" stroke="#444" stroke-width="0.9"/><rect x="10.4" y="47.3" width="42.2" height="21.5" fill="#fff" stroke="#444" stroke-width="0.9"/><rect x="-8.60" y="-8.60" width="17.2" height="17.2" rx="4.2" fill="#fff" stroke="#555" stroke-width="2"/><rect x="22.40" y="-8.60" width="17.2" height="17.2" rx="4.2" fill="#fff" stroke="#555" stroke-width="2"/><rect x="53.40" y="-8.60" width="17.2" height="17.2" rx="4.2" fill="#fff" stroke="#555" stroke-width="2"/><rect x="-8.60" y="39.75" width="17.2" height="17.2" rx="4.2" fill="#fff" stroke="#555" stroke-width="2"/><rect x="53.40" y="39.75" width="17.2" height="17.2" rx="4.2" fill="#fff" stroke="#555" stroke-width="2"/><rect x="-8.60" y="88.10" width="17.2" height="17.2" rx="4.2" fill="#fff" stroke="#555" stroke-width="2"/><rect x="22.40" y="88.10" width="17.2" height="17.2" rx="4.2" fill="#fff" stroke="#555" stroke-width="2"/><rect x="53.40" y="88.10" width="17.2" height="17.2" rx="4.2" fill="#fff" stroke="#555" stroke-width="2"/><g transform="translate(39.5,86.5)"><path d="M0 0V29.9L6.3 22.9L13.9 39.6L20.1 37.3L12.6 20.6L22.2 19.9Z" fill="#fff" stroke="#000" stroke-width="2" stroke-linejoin="miter"/></g></g>
<g transform="translate(1344,889.3)" opacity="0.9"><path d="M10 0.3H52.8V10.3Q52.8 12.3 50.8 12.3H12Q10 12.3 10 10.3Z" fill="#808080" stroke="#444" stroke-width="1"/><rect x="6.5" y="12.3" width="49.3" height="84" rx="9.5" fill="#cccccc" stroke="#444" stroke-width="1.1"/><rect x="10.4" y="36.3" width="42.2" height="6" fill="#fff" stroke="#444" stroke-width="0.9"/><rect x="10.4" y="42.3" width="42.2" height="5" fill="#c8c8c8" stroke="#444" stroke-width="0.9"/><rect x="10.4" y="47.3" width="42.2" height="21.5" fill="#fff" stroke="#444" stroke-width="0.9"/><rect x="-8.60" y="-8.60" width="17.2" height="17.2" rx="4.2" fill="#fff" stroke="#555" stroke-width="2"/><rect x="22.40" y="-8.60" width="17.2" height="17.2" rx="4.2" fill="#fff" stroke="#555" stroke-width="2"/><rect x="53.40" y="-8.60" width="17.2" height="17.2" rx="4.2" fill="#fff" stroke="#555" stroke-width="2"/><rect x="-8.60" y="39.75" width="17.2" height="17.2" rx="4.2" fill="#fff" stroke="#555" stroke-width="2"/><rect x="53.40" y="39.75" width="17.2" height="17.2" rx="4.2" fill="#fff" stroke="#555" stroke-width="2"/><rect x="-8.60" y="88.10" width="17.2" height="17.2" rx="4.2" fill="#fff" stroke="#555" stroke-width="2"/><rect x="22.40" y="88.10" width="17.2" height="17.2" rx="4.2" fill="#fff" stroke="#555" stroke-width="2"/><rect x="53.40" y="88.10" width="17.2" height="17.2" rx="4.2" fill="#fff" stroke="#555" stroke-width="2"/><g transform="translate(39.5,86.5)"><path d="M0 0V29.9L6.3 22.9L13.9 39.6L20.1 37.3L12.6 20.6L22.2 19.9Z" fill="#fff" stroke="#000" stroke-width="2" stroke-linejoin="miter"/></g></g>
<defs><filter id="glow" x="-50%" y="-50%" width="200%" height="200%"><feGaussianBlur stdDeviation="7"/></filter></defs>
<g transform="translate(1496,721.7)"><rect x="2" y="8" width="58" height="88" rx="10" fill="#ffcf33" opacity="0.8" filter="url(#glow)"/><path d="M10 0.3H52.8V10.3Q52.8 12.3 50.8 12.3H12Q10 12.3 10 10.3Z" fill="#808080" stroke="#2a2a2a" stroke-width="1"/><rect x="6.5" y="12.3" width="49.3" height="84" rx="9.5" fill="#cccccc" stroke="#2a2a2a" stroke-width="1.1"/><rect x="10.4" y="36.3" width="42.2" height="6" fill="#fff" stroke="#2a2a2a" stroke-width="0.9"/><rect x="10.4" y="42.3" width="42.2" height="5" fill="#c8c8c8" stroke="#2a2a2a" stroke-width="0.9"/><rect x="10.4" y="47.3" width="42.2" height="21.5" fill="#fff" stroke="#2a2a2a" stroke-width="0.9"/><rect x="-8.60" y="-8.60" width="17.2" height="17.2" rx="4.2" fill="#fff" stroke="#505050" stroke-width="2"/><rect x="22.40" y="-8.60" width="17.2" height="17.2" rx="4.2" fill="#fff" stroke="#505050" stroke-width="2"/><rect x="53.40" y="-8.60" width="17.2" height="17.2" rx="4.2" fill="#fff" stroke="#505050" stroke-width="2"/><rect x="-8.60" y="39.75" width="17.2" height="17.2" rx="4.2" fill="#fff" stroke="#505050" stroke-width="2"/><rect x="53.40" y="39.75" width="17.2" height="17.2" rx="4.2" fill="#fff" stroke="#505050" stroke-width="2"/><rect x="-8.60" y="88.10" width="17.2" height="17.2" rx="4.2" fill="#fff" stroke="#505050" stroke-width="2"/><rect x="22.40" y="88.10" width="17.2" height="17.2" rx="4.2" fill="#fff" stroke="#505050" stroke-width="2"/><rect x="53.40" y="88.10" width="17.2" height="17.2" rx="4.2" fill="#fff" stroke="#505050" stroke-width="2"/><g transform="translate(41,84.3)"><path d="M0 0V29.9L6.3 22.9L13.9 39.6L20.1 37.3L12.6 20.6L22.2 19.9Z" fill="#fff" stroke="#000" stroke-width="2" stroke-linejoin="miter"/></g></g>
</svg>
<div class="a" style="left:686px;top:76px;width:2024px;height:40px;background:#ebecee"></div>
<div class="a" style="left:686px;top:76px;width:2024px;height:2px;background:#f1f2f4"></div>
<div class="a" style="left:686px;top:76px;width:36px;height:1618px;background:#ebecee"></div>
<div class="a" style="left:2708px;top:76px;width:3px;height:40px;background:#dcdcdc"></div>
<svg class="a" style="left:0;top:0" width="2711" height="1695" viewBox="0 0 2711 1695">
<path d="M734.00 106V116M769.20 106V116M786.80 106V116M804.40 106V116M822.00 106V116M839.60 106V116M874.80 106V116M892.40 106V116M910.00 106V116M927.60 106V116M945.20 106V116M980.40 106V116M998.00 106V116M1015.60 106V116M1033.20 106V116M1050.80 106V116M1086.00 106V116M1103.60 106V116M1121.20 106V116M1138.80 106V116M1156.40 106V116M1191.60 106V116M1209.20 106V116M1226.80 106V116M1244.40 106V116M1262.00 106V116M1297.20 106V116M1314.80 106V116M1332.40 106V116M1350.00 106V116M1367.60 106V116M1402.80 106V116M1420.40 106V116M1438.00 106V116M1455.60 106V116M1473.20 106V116M1508.40 106V116M1526.00 106V116M1543.60 106V116M1561.20 106V116M1578.80 106V116M1614.00 106V116M1631.60 106V116M1649.20 106V116M1666.80 106V116M1684.40 106V116M1719.60 106V116M1737.20 106V116M1754.80 106V116M1772.40 106V116M1790.00 106V116M1825.20 106V116M1842.80 106V116M1860.40 106V116M1878.00 106V116M1895.60 106V116M1930.80 106V116M1948.40 106V116M1966.00 106V116M1983.60 106V116M2001.20 106V116M2036.40 106V116M2054.00 106V116M2071.60 106V116M2089.20 106V116M2106.80 106V116M2142.00 106V116M2159.60 106V116M2177.20 106V116M2194.80 106V116M2212.40 106V116M2247.60 106V116M2265.20 106V116M2282.80 106V116M2300.40 106V116M2318.00 106V116M2353.20 106V116M2370.80 106V116M2388.40 106V116M2406.00 106V116M2423.60 106V116M2458.80 106V116M2476.40 106V116M2494.00 106V116M2511.60 106V116M2529.20 106V116M2564.40 106V116M2582.00 106V116M2599.60 106V116M2617.20 106V116M2634.80 106V116M2670.00 106V116M2687.60 106V116M2705.20 106V116M712 121.00H722M712 138.60H722M712 156.20H722M712 173.80H722M712 209.00H722M712 226.60H722M712 244.20H722M712 261.80H722M712 279.40H722M712 314.60H722M712 332.20H722M712 349.80H722M712 367.40H722M712 385.00H722M712 420.20H722M712 437.80H722M712 455.40H722M712 473.00H722M712 490.60H722M712 525.80H722M712 543.40H722M712 561.00H722M712 578.60H722M712 596.20H722M712 631.40H722M712 649.00H722M712 666.60H722M712 684.20H722M712 701.80H722M712 737.00H722M712 754.60H722M712 772.20H722M712 789.80H722M712 807.40H722M712 842.60H722M712 860.20H722M712 877.80H722M712 895.40H722M712 913.00H722M712 948.20H722M712 965.80H722M712 983.40H722M712 1001.00H722M712 1018.60H722M712 1053.80H722M712 1071.40H722M712 1089.00H722M712 1106.60H722M712 1124.20H722M712 1159.40H722M712 1177.00H722M712 1194.60H722M712 1212.20H722M712 1229.80H722M712 1265.00H722M712 1282.60H722M712 1300.20H722M712 1317.80H722M712 1335.40H722M712 1370.60H722M712 1388.20H722M712 1405.80H722M712 1423.40H722M712 1441.00H722M712 1476.20H722M712 1493.80H722M712 1511.40H722M712 1529.00H722M712 1546.60H722M712 1581.80H722M712 1599.40H722M712 1617.00H722M712 1634.60H722M712 1652.20H722M712 1687.40H722" stroke="#555" stroke-width="1.6" fill="none"/>
<path d="M751.60 96V116M962.80 96V116M1174.00 96V116M1385.20 96V116M1596.40 96V116M1807.60 96V116M2018.80 96V116M2230.00 96V116M2441.20 96V116M2652.40 96V116M702 191.40H722M702 402.60H722M702 613.80H722M702 825.00H722M702 1036.20H722M702 1247.40H722M702 1458.60H722M702 1669.80H722" stroke="#333" stroke-width="1.3" fill="none"/>
<path d="M857.20 86V116M1068.40 86V116M1279.60 86V116M1490.80 86V116M1702.00 86V116M1913.20 86V116M2124.40 86V116M2335.60 86V116M2546.80 86V116M692 297.00H722M692 508.20H722M692 719.40H722M692 930.60H722M692 1141.80H722M692 1353.00H722M692 1564.20H722" stroke="#333" stroke-width="1.3" fill="none"/>
<g font-family="Liberation Sans, sans-serif" font-size="19.6" fill="#1a1a1a"><text transform="translate(861.80,97.3) scale(0.86,1)">2</text><text transform="translate(1073.00,97.3) scale(0.86,1)">4</text><text transform="translate(1284.20,97.3) scale(0.86,1)">6</text><text transform="translate(1495.40,97.3) scale(0.86,1)">8</text><text transform="translate(1706.60,97.3) scale(0.86,1)">10</text><text transform="translate(1917.80,97.3) scale(0.86,1)">12</text><text transform="translate(2129.00,97.3) scale(0.86,1)">14</text><text transform="translate(2340.20,97.3) scale(0.86,1)">16</text><text transform="translate(2551.40,97.3) scale(0.86,1)">18</text><text transform="translate(688.5,320.60) scale(0.86,1)">2</text><text transform="translate(688.5,531.80) scale(0.86,1)">4</text><text transform="translate(688.5,743.00) scale(0.86,1)">6</text><text transform="translate(688.5,954.20) scale(0.86,1)">8</text><text transform="translate(688.5,1165.40) scale(0.86,1)">10</text><text transform="translate(688.5,1376.60) scale(0.86,1)">12</text><text transform="translate(688.5,1587.80) scale(0.86,1)">14</text></g>
</svg>
<div class="a" style="left:722px;top:1670.3px;width:1974.0px;height:9.7px;background:#fff;border-radius:0px;"></div>
<div class="a" style="left:722.8px;top:1680px;width:1973.2px;height:13.0px;background:#efefef;border-radius:7px;"></div>
<div class="a" style="left:792.9px;top:1680px;width:1845.1px;height:13.0px;background:#c9c9c9;border-radius:7px;"></div>
<div class="a" style="left:2696.4px;top:116px;width:13.4px;height:1564.0px;background:#efefef;border-radius:7px;"></div>
<div class="a" style="left:2696.4px;top:145.8px;width:13.4px;height:1534.2px;background:#c9c9c9;border-radius:7px;"></div>
<div class="a" style="left:100px;top:1693.6px;width:2611.0px;height:1.4px;background:#7a7a7a;border-radius:0px;"></div>
<div class="a" style="left:748.3px;top:1602px;width:190.5px;height:71.7px;background:#f3f4f6;border-radius:14px;"></div>
<svg class="a" style="left:781px;top:1618px;overflow:visible" width="38" height="40" viewBox="0 0 38 40"><path d="M18.9 3.3L33.5 12.75L18.9 22.2L4.3 12.75Z" fill="none" stroke="#3d3d3d" stroke-width="2.7" stroke-linejoin="round"/><path d="M3.6 19L18.9 28.8L34.2 19M3.6 25.4L18.9 35.4L34.2 25.4" fill="none" stroke="#3d3d3d" stroke-width="2.7" stroke-linejoin="round" stroke-linecap="round"/></svg>
<div class="t" style="left:831.0px;top:1624.5px;font-size:24px;color:#3a3a3a;">Layer-1</div>
<div class="a" style="left:979.8px;top:1602px;width:1193.7px;height:71.5px;background:#f3f4f6;border-radius:14px;"></div>
<div class="t" style="left:997.8px;top:1625.4px;font-size:27px;color:#3a3a3a;">Left</div>
<div class="a" style="left:1057px;top:1617.9px;width:188.0px;height:42.0px;background:#fff;border-radius:12px;box-shadow:0 2px 5px rgba(0,0,0,0.13)"></div>
<div class="t" style="left:1070.6px;top:1625.1px;font-size:24px;color:#2e2e2e;">8' 0 5/8"</div>
<div class="t" style="left:1279.4px;top:1625.4px;font-size:27px;color:#3a3a3a;">Top</div>
<div class="a" style="left:1335px;top:1617.9px;width:187.5px;height:42.0px;background:#fff;border-radius:12px;box-shadow:0 2px 5px rgba(0,0,0,0.13)"></div>
<div class="t" style="left:1349.8px;top:1625.1px;font-size:24px;color:#2e2e2e;">6' 0 1/4"</div>
<div class="t" style="left:1555.2px;top:1625.4px;font-size:27px;color:#3a3a3a;">Height</div>
<div class="a" style="left:1650px;top:1617.9px;width:188.0px;height:42.0px;background:#fff;border-radius:12px;box-shadow:0 2px 5px rgba(0,0,0,0.13)"></div>
<div class="t" style="left:1664.2px;top:1625.1px;font-size:24px;color:#2e2e2e;">11"</div>
<div class="t" style="left:1871.5px;top:1625.4px;font-size:27px;color:#3a3a3a;">Width</div>
<div class="a" style="left:1955.6px;top:1617.9px;width:187.7px;height:42.0px;background:#fff;border-radius:12px;box-shadow:0 2px 5px rgba(0,0,0,0.13)"></div>
<div class="t" style="left:1969.6px;top:1625.1px;font-size:24px;color:#2e2e2e;">7"</div>
<div class="a" style="left:2178.2px;top:1644.2px;width:309.2px;height:8.2px;background:#ececec;border-radius:4px;"></div>
<div class="a" style="left:2178.2px;top:1644.2px;width:77.8px;height:8.2px;background:#c8c8c8;border-radius:4px;"></div>
<div class="a" style="left:2242.2px;top:1628.2px;width:27.3px;height:35.1px;background:#fff;border-radius:5px;border:2.4px solid #555;box-shadow:1px 2px 3px rgba(0,0,0,0.25)"></div>
<div class="a" style="left:2488.3px;top:1622.2px;width:83.7px;height:51.5px;background:#efefef;border-radius:12px;"></div>
<div class="t" style="left:2495.8px;top:1636.6px;font-size:24.5px;color:#2e2e2e;">110%</div>
<div class="a" style="left:2602px;top:1621px;width:68.0px;height:52.8px;background:#ededed;border-radius:12px;"></div>
<svg class="a" style="left:2619px;top:1632px;overflow:visible" width="34" height="32" viewBox="0 0 34 32"><path d="M2.4 9.7L12.25 3L21.6 9.7L31.4 3V21.75L21.6 28.4L12.25 21.75L2.4 28.4Z" fill="none" stroke="#3d3d3d" stroke-width="2.5" stroke-linejoin="miter"/><path d="M12.25 3V21.75M21.6 9.7V28.4" stroke="#3d3d3d" stroke-width="2.5"/></svg>
</body></html>
